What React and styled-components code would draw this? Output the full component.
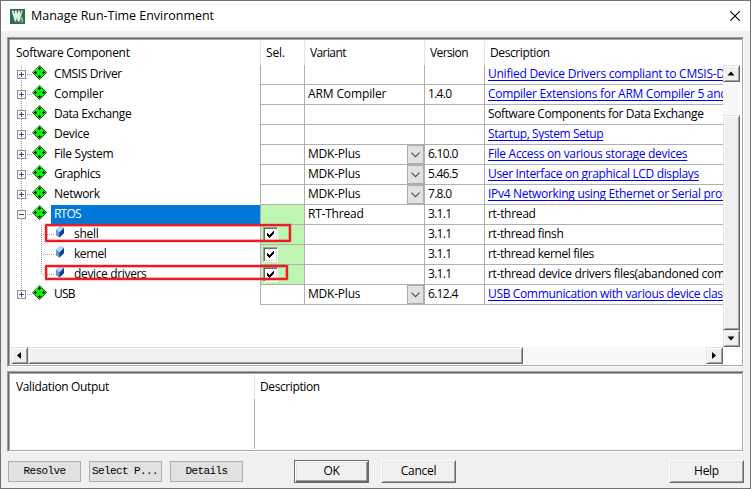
import React from "react";
import styled, { createGlobalStyle, css } from "styled-components";

const Global = createGlobalStyle`
  * { box-sizing: border-box; }
  html, body { margin: 0; padding: 0; overflow: hidden; }
  svg { display: block; flex: none; }
`;

const Dialog = styled.div`
  width: 751px;
  height: 489px;
  display: flex;
  flex-direction: column;
  border: 1px solid #707070;
  background: #f0f0f0;
  color: #000;
  font: 12px/20px "Open Sans", sans-serif;
  white-space: pre;
`;

const TitleBar = styled.header`
  height: 30px;
  flex: none;
  display: flex;
  align-items: center;
  padding: 0 10px 0 9px;
  background: #fff;
`;

const Title = styled.h1`
  flex: 1;
  margin: 0 0 0 6px;
  font-size: 12.5px;
  font-weight: 400;
  letter-spacing: ${(p) => p.$ls}px;
`;

const Label = styled.span`
  display: inline-block;
  letter-spacing: ${(p) => p.$ls ?? -0.3}px;
`;

const Body = styled.main`
  flex: 1;
  display: flex;
  flex-direction: column;
  padding: 6px 6px 0;
`;

const Panel = styled.section`
  width: 737px;
  height: ${(p) => p.$height}px;
  flex: none;
  margin-bottom: ${(p) => p.$gap}px;
  border: 1px solid #fff;
  border-top-color: #a0a0a0;
  border-left-color: #a0a0a0;
`;

const PanelInner = styled.div`
  height: 100%;
  border: 1px solid #a7a7ac;
  border-top: 1px solid #696969;
  border-left: 1px solid #696969;
  box-shadow: inset 1px 1px #a7a7a7;
  background: #fff;
  padding: 2px 1px 0 1px;
  position: relative;
`;

const Header = styled.div`
  height: 24px;
  display: grid;
  grid-template-columns: ${(p) => p.$columns};
`;

const HeaderCell = styled.div`
  padding: 2px 0 0 ${(p) => (p.$first ? 6 : 5)}px;
  border-left: ${(p) => (p.$first ? "none" : "1px solid #e5e5e5")};
`;

const TableArea = styled.div`
  height: 282px;
  display: flex;
`;

const Rows = styled.div`
  width: 713px;
  overflow: hidden;
`;

const Row = styled.div`
  display: grid;
  grid-template-columns: 250px 44px 120px 60px 239px;
  height: 20px;
`;

const Cell = styled.div`
  display: flex;
  justify-content: space-between;
  overflow: hidden;
  padding-left: ${(p) => (p.$check ? 2 : 3)}px;
  border-left: 1px solid #b0b0b0;
  border-bottom: 1px solid #b0b0b0;
  line-height: 18px;
  background: ${(p) => (p.$green ? "#bdf5b1" : "#fff")};
`;

const TreeCell = styled.div`
  display: flex;
`;

const Name = styled.div`
  flex: 1;
  height: 19px;
  line-height: 18px;
  padding-left: 3px;
  ${(p) => p.$selected && css`background: #0078d7; color: #fff;`}
`;

const Link = styled.a`
  color: #0000f0;
  text-decoration: underline;
  text-decoration-skip-ink: none;
  text-decoration-thickness: 1px;
  text-underline-offset: 2px;
  letter-spacing: ${(p) => p.$ls ?? -0.3}px;
`;

const DropButton = styled.button`
  width: 17px;
  height: 19px;
  padding: 0;
  flex: none;
  display: grid;
  place-items: center;
  border: 1px solid #adadad;
  background: #e1e1e1;
`;

const CheckBox = styled.div`
  width: 15px;
  height: 15px;
  margin-top: 2px;
  border: 1px solid;
  border-color: #a0a0a0 #fff #fff #a0a0a0;
  box-shadow: inset 1px 1px #696969, inset -1px -1px #e3e3e3;
  background: #fff;
`;

const VBar = styled.div`
  width: 17px;
  display: flex;
  flex-direction: column;
`;

const HBar = styled.div`
  height: 17px;
  width: 712px;
  margin-left: 1px;
  display: flex;
`;

const raised = css`
  background: #f0f0f0;
  border: 1px solid;
  border-color: #e3e3e3 #696969 #696969 #e3e3e3;
  box-shadow: inset 1px 1px #fff, inset -1px -1px #a0a0a0;
`;

const Arrow = styled.div`
  ${raised}
  width: 17px;
  height: 17px;
  flex: none;
`;

const Track = styled.div`
  flex: ${(p) => p.$size};
  background: repeating-conic-gradient(#fff 0 25%, #f0f0f0 0 50%) 0 0 / 2px 2px;
`;

const Thumb = styled.div`
  ${raised}
  flex: 0 0 ${(p) => p.$size}px;
`;

const Highlight = styled.div`
  position: absolute;
  left: 36px;
  top: ${(p) => p.$top}px;
  width: ${(p) => p.$width}px;
  height: ${(p) => p.$height}px;
  border: 2px solid #ed1c24;
  border-radius: 1px;
  box-shadow: inset 0 0 0 1px #ed1c2455, 0 0 0 1px #ed1c2433;
`;

const Divider = styled.div`
  height: 50px;
  margin-left: 244px;
  border-left: 1px solid #b0b0b0;
`;

const Footer = styled.footer`
  height: 24px;
  display: flex;
  align-items: center;
  padding-left: 1px;
`;

const FlatButton = styled.button`
  width: 73px;
  height: 21px;
  margin-right: 8px;
  padding: 0 0 0 ${(p) => p.$indent ?? 0}px;
  text-align: ${(p) => (p.$indent ? "left" : "center")};
  border: 1px solid #adadad;
  background: #e1e1e1;
  font: 11px/19px "Liberation Mono", monospace;
  letter-spacing: -0.6px;
  white-space: nowrap;
`;

const DialogButton = styled.button`
  width: 75px;
  height: 23px;
  padding: 0 0 1px;
  margin-left: ${(p) => p.$before}px;
  border: 1px solid;
  border-color: ${(p) => (p.$primary ? "#696969" : "#fff #696969 #696969 #fff")};
  box-shadow: ${(p) =>
    p.$primary
      ? "inset 1px 1px #fff, inset -1px -1px #696969, inset -2px -2px #a0a0a0, inset 2px 2px #e3e3e3"
      : "inset 1px 1px #e3e3e3, inset -1px -1px #a0a0a0"};
  background: #f0f0f0;
  font: 12px/18px "Open Sans", sans-serif;
  letter-spacing: -0.3px;
`;

const AppIcon = () => (
  <svg width="15" height="15" viewBox="0 0 15 15">
    <rect width="15" height="15" fill="#2a6e4c" />
    <path d="M1.5 1.5h2l.8 3.5.8-3.5h1.4l.8 3.5.8-3.5h1.4l.8 3.5.8-3.5h1.6L10.6 9 9.6 12.5H8L6.9 9l-.8 3.5H4.8z" fill="#e0efe6" />
    <path d="M13 9h-2v1.7h1.7V13h-2.2" fill="none" stroke="#a9d5b9" strokeWidth=".9" />
  </svg>
);

const CloseIcon = () => (
  <svg width="10" height="10" viewBox="0 0 10 10">
    <path d="M.3.3l9.4 9.4M9.7.3L.3 9.7" stroke="#000" strokeWidth="1.1" />
  </svg>
);

const ArrowIcon = ({ turn }) => (
  <svg width="15" height="15" viewBox="0 0 15 15">
    <path d="M3.5 9.5h7L7 5.5z" fill="#000" transform={`rotate(${turn} 7 7.5)`} />
  </svg>
);

const Chevron = () => (
  <svg width="9" height="6" viewBox="0 0 9 6">
    <path d="M.5.7l4 4 4-4" fill="none" stroke="#505050" strokeWidth="1.2" />
  </svg>
);

const Check = () => (
  <svg width="13" height="13" viewBox="0 0 13 13" shapeRendering="crispEdges">
    <path d="M3 5v3l2 2 5-5V2L5 7z" fill="#000" />
  </svg>
);

const Dots = ({ d }) => <path d={d} stroke="#a0a0a0" strokeDasharray="1 1" />;

const GroupMark = ({ open, first, last }) => (
  <svg width="41" height="20" viewBox="0 0 41 20" shapeRendering="crispEdges">
    <Dots d={`M11.5 ${first ? 1 : 0}V${last ? 9 : 20}`} />
    <Dots d="M17 9.5H23" />
    <rect x="7.5" y="5.5" width="8" height="8" rx="1" fill="#f8f8f8" stroke="#919191" />
    <path d={open ? "M9 9.5h5" : "M9 9.5h5M11.5 7v5"} stroke="#2b4a9b" />
    <g shapeRendering="auto">
      <path d="M29.5 0L37 7.5 29.5 15 22 7.5z" fill="#00f800" />
      <path d="M22.5 7.5l7-7" fill="none" stroke="#7a7a7a" />
      <path d="M29.5 .5l7 7-7 7-7-7" fill="none" stroke="#303830" strokeWidth=".9" />
    </g>
    <path
      d="M28 3.5h3M29.5 2v3M28 11.5h3M29.5 10v3M24 7.5h3M25.5 6v3M32 7.5h3M33.5 6v3"
      stroke="#000"
    />
  </svg>
);

const LeafMark = ({ last }) => (
  <svg width="41" height="20" viewBox="0 0 41 20" overflow="visible">
    <g shapeRendering="crispEdges">
      <Dots d="M11.5 0V20" />
      <Dots d={`M31.5 0V${last ? 10 : 20}`} />
      <Dots d="M33 9.5H44" />
    </g>
    <path d="M46 5l4.5-4 3.5 2v5l-4.5 4.5L46 10z" fill="#2b62b5" />
    <path d="M46 5l4.5-4 3.5 2-4.5 4.5z" fill="#b4dcfa" />
    <path d="M46 5l3.5 2.5v5L46 10z" fill="#5c9ade" />
    <path d="M49.5 7.5L54 3v5l-4.5 4.5z" fill="#163f8c" />
  </svg>
);

const LeafName = styled(Name)`
  padding-left: 23px;
`;

const rows = [
  { name: "CMSIS Driver", ls: -0.37, desc: "Unified Device Drivers compliant to CMSIS-Driver", link: true, dls: -0.25 },
  { name: "Compiler", ls: -0.2, variant: "ARM Compiler", vls: -0.12, version: "1.4.0", desc: "Compiler Extensions for ARM Compiler 5 and", link: true, dls: -0.28 },
  { name: "Data Exchange", ls: -0.43, desc: "Software Components for Data Exchange", dls: -0.39 },
  { name: "Device", desc: "Startup, System Setup", link: true, dls: -0.39 },
  { name: "File System", variant: "MDK-Plus", drop: true, version: "6.10.0", desc: "File Access on various storage devices", link: true },
  { name: "Graphics", ls: -0.4, variant: "MDK-Plus", drop: true, version: "5.46.5", desc: "User Interface on graphical LCD displays", link: true, dls: -0.35 },
  { name: "Network", variant: "MDK-Plus", drop: true, version: "7.8.0", desc: "IPv4 Networking using Ethernet or Serial protocols", link: true, dls: -0.31 },
  { name: "RTOS", ls: -0.8, open: true, green: true, variant: "RT-Thread", version: "3.1.1", desc: "rt-thread" },
  { name: "shell", leaf: true, green: true, version: "3.1.1", desc: "rt-thread finsh", dls: -0.37 },
  { name: "kernel", ls: -0.45, leaf: true, green: true, version: "3.1.1", desc: "rt-thread kernel files", dls: -0.38 },
  { name: "device drivers", ls: -0.35, leaf: true, last: true, green: true, version: "3.1.1", desc: "rt-thread device drivers files(abandoned components)", dls: -0.33 },
  { name: "USB", ls: -0.8, variant: "MDK-Plus", drop: true, version: "6.12.4", desc: "USB Communication with various device classes", link: true, dls: -0.35 },
];

function ComponentRow({ item, first, last }) {
  const NameBox = item.leaf ? LeafName : Name;
  return (
    <Row>
      <TreeCell>
        {item.leaf ? <LeafMark last={item.last} /> : <GroupMark open={item.open} first={first} last={last} />}
        <NameBox $selected={item.open}><Label $ls={item.ls}>{item.name}</Label></NameBox>
      </TreeCell>
      <Cell $green={item.green} $check={item.leaf}>{item.leaf && <CheckBox><Check /></CheckBox>}</Cell>
      <Cell>
        <Label $ls={item.vls ?? -0.22}>{item.variant}</Label>
        {item.drop && <DropButton><Chevron /></DropButton>}
      </Cell>
      <Cell><Label $ls={-0.7}>{item.version}</Label></Cell>
      <Cell>{item.link ? <Link $ls={item.dls}>{item.desc}</Link> : <Label $ls={item.dls}>{item.desc}</Label>}</Cell>
    </Row>
  );
}

export default function App() {
  return (
    <Dialog>
      <Global />
      <TitleBar>
        <AppIcon />
        <Title $ls={-0.03}>Manage Run-Time Environment</Title>
        <CloseIcon />
      </TitleBar>
      <Body>
        <Panel $height={330} $gap={4}>
          <PanelInner>
            <Header $columns="250px 44px 120px 60px 1fr">
              <HeaderCell $first><Label>Software Component</Label></HeaderCell>
              <HeaderCell><Label $ls={-0.2}>Sel.</Label></HeaderCell>
              <HeaderCell><Label $ls={-0.6}>Variant</Label></HeaderCell>
              <HeaderCell><Label $ls={-0.6}>Version</Label></HeaderCell>
              <HeaderCell><Label $ls={-0.4}>Description</Label></HeaderCell>
            </Header>
            <TableArea>
              <Rows>
                {rows.map((item, i) => (
                  <ComponentRow key={item.name} item={item} first={i === 0} last={i === rows.length - 1} />
                ))}
              </Rows>
              <VBar>
                <Arrow><ArrowIcon turn={0} /></Arrow>
                <Track $size={1} />
                <Thumb $size={215} />
                <Arrow><ArrowIcon turn={180} /></Arrow>
              </VBar>
            </TableArea>
            <HBar>
              <Arrow><ArrowIcon turn={-90} /></Arrow>
              <Thumb $size={495} />
              <Track $size={1} />
              <Arrow><ArrowIcon turn={90} /></Arrow>
            </HBar>
            <Highlight $top={185} $width={246} $height={18} />
            <Highlight $top={226} $width={243} $height={15} />
          </PanelInner>
        </Panel>
        <Panel $height={81} $gap={7}>
          <PanelInner>
            <Header $columns="244px 1fr">
              <HeaderCell $first><Label $ls={-0.35}>Validation Output</Label></HeaderCell>
              <HeaderCell><Label $ls={-0.4}>Description</Label></HeaderCell>
            </Header>
            <Divider />
          </PanelInner>
        </Panel>
        <Footer>
          <FlatButton>Resolve</FlatButton>
          <FlatButton $indent={2}>Select P...</FlatButton>
          <FlatButton>Details</FlatButton>
          <DialogButton $before={43} $primary>OK</DialogButton>
          <DialogButton $before={12}>Cancel</DialogButton>
          <DialogButton $before={213}>Help</DialogButton>
        </Footer>
      </Body>
    </Dialog>
  );
}
